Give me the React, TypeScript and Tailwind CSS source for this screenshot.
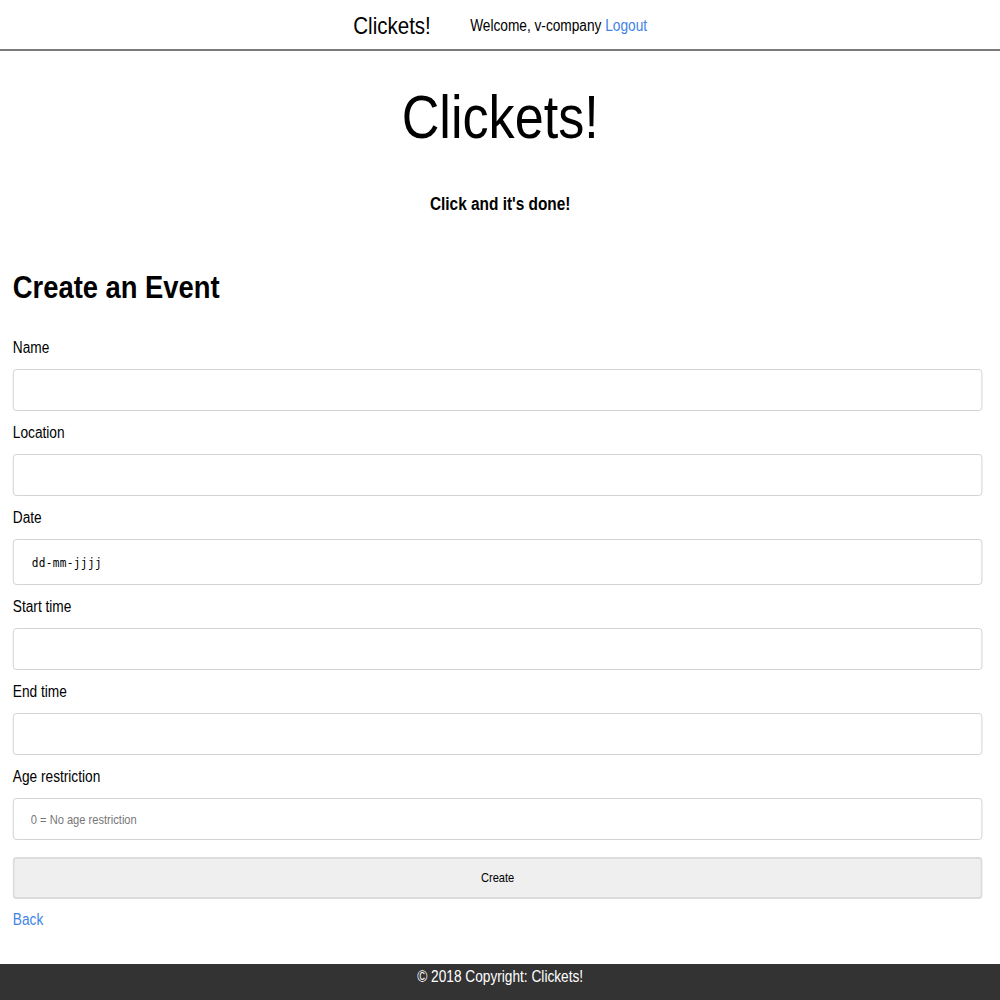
import React from "react";

const font = { fontFamily: '"Liberation Sans", Arial, sans-serif' };

function Field({ label, children }: { label: string; children: React.ReactNode }) {
  return (
    <div className="mb-[11px]">
      <label className="block text-[16px] leading-[22px] mb-[10px] text-black">{label}</label>
      {children}
    </div>
  );
}

const inputCls = "block w-full h-[42px] rounded-[4px] border border-[#cfcfcf] bg-white px-[20px] text-[13px] outline-none";

export default function App() {
  return (
    <div className="w-full overflow-hidden bg-white">
      {/* the page was captured wider and squeezed into 1000px, so the layout is 1170px wide */}
      <div className="w-[1170px] min-h-[1000px] origin-top-left scale-x-[0.855] flex flex-col text-black" style={font}>
        <nav className="h-[51px] border-b-2 border-[#7a7a7a] flex items-center justify-center gap-[46px]">
          <span className="text-[24px] leading-none pt-[2px]">Clickets!</span>
          <span className="text-[16px] pt-[2px]">
            Welcome, v-company <a className="text-[#3f83e6]" href="#">Logout</a>
          </span>
        </nav>

        <header className="text-center">
          <h1 className="text-[61px] leading-[72px] pt-[30px]">Clickets!</h1>
          <p className="mt-[39px] text-[18px] font-bold leading-[24px]">Click and it's done!</p>
        </header>

        <main className="pl-[15px] pr-[21px] flex-1">
          <h2 className="mt-[53px] mb-[32px] text-[32px] font-bold leading-[36px]">Create an Event</h2>
          <form>
            <Field label="Name">
              <input className={inputCls} />
            </Field>
            <Field label="Location">
              <input className={inputCls} />
            </Field>
            <Field label="Date">
              <input
                className={inputCls + " h-[46px] px-[21px] placeholder:text-black text-[12px] tracking-[0.4px]"}
                style={{ fontFamily: '"DejaVu Sans Mono", monospace' }}
                placeholder="dd-mm-jjjj"
              />
            </Field>
            <Field label="Start time">
              <input className={inputCls} />
            </Field>
            <Field label="End time">
              <input className={inputCls} />
            </Field>
            <Field label="Age restriction">
              <input className={inputCls + " placeholder:text-[#777]"} placeholder="0 = No age restriction" />
            </Field>
            <button
              type="button"
              className="mt-[6px] w-full h-[42px] rounded-[4px] border-2 border-[#dcdcdc] bg-[#efefef] text-[13px]"
            >
              Create
            </button>
            <a href="#" className="block mt-[10px] text-[16px] leading-[22px] text-[#3f83e6]">
              Back
            </a>
          </form>
        </main>

        <footer className="h-[36px] bg-[#333333] text-white text-center text-[16px] leading-[26px]">
          © 2018 Copyright: Clickets!
        </footer>
      </div>
    </div>
  );
}
